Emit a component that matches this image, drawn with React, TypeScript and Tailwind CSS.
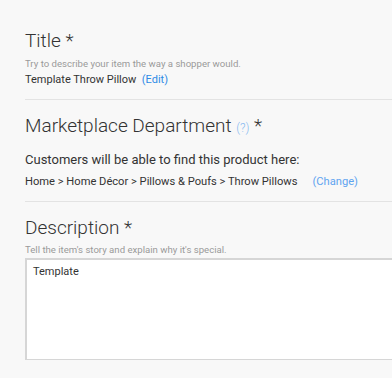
const Divider = () => <div className="h-px bg-[#e3e3e3]" />;

export default function App() {
  return (
    <div className="min-h-[378px] bg-[#f8f8f8] pl-[25px] pt-[30px] font-['Roboto',sans-serif] text-[#333]">
      <section className="pb-[11px]">
        <h2 className="text-[19px] font-light leading-[22px]">Title *</h2>
        <p className="mt-[5px] text-[9.6px] leading-[13px] text-[#9a9a9a]">
          Try to describe your item the way a shopper would.
        </p>
        <p className="mt-[2px] text-[11px] leading-[16px]">
          Template Throw Pillow&nbsp;&nbsp;<span className="text-[#2f8be6]">(Edit)</span>
        </p>
      </section>
      <Divider />
      <section className="pt-[15px] pb-[11px]">
        <h2 className="text-[19px] font-light leading-[22px]">
          Marketplace Department <span className="text-[12px] text-[#86b8f0]">(?)</span> *
        </h2>
        <p className="mt-[12px] text-[13px] leading-[18px]">Customers will be able to find this product here:</p>
        <p className="mt-[5px] text-[11.15px] leading-[16px]">
          Home &gt; Home Décor &gt; Pillows &amp; Poufs &gt; Throw Pillows
          <span className="ml-[15px] text-[#5ea4f0]">(Change)</span>
        </p>
      </section>
      <Divider />
      <section className="pt-[15px]">
        <h2 className="text-[19px] font-light leading-[22px]">Description *</h2>
        <p className="mt-[4px] text-[9.6px] leading-[13px] text-[#9a9a9a]">
          Tell the item's story and explain why it's special.
        </p>
        <div className="mt-[2px] h-[102px] border-t-2 border-l-2 border-b border-[#d6d6d6] bg-white px-[6px] pt-[4px] text-[11px] leading-[16px]">
          Template
        </div>
      </section>
    </div>
  );
}
